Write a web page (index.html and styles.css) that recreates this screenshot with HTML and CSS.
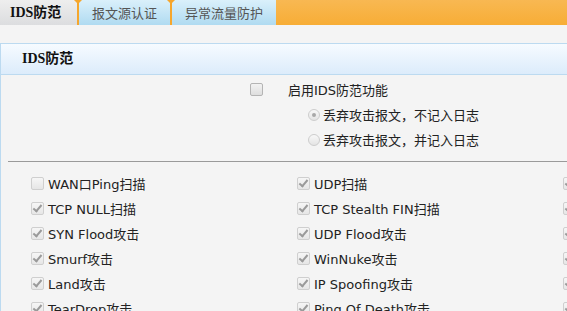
FILE: index.html
```html
<!DOCTYPE html>
<html lang="zh-CN">
<head>
    <meta charset="UTF-8">
    <title>IDS防范</title>
    <link rel="stylesheet" href="styles.css">
</head>
<body>
    <div class="tabs">
        <div class="tab active">IDS防范</div>
        <div class="tab">报文源认证</div>
        <div class="tab">异常流量防护</div>
    </div>

    <div class="panel">
        <div class="panel-head">IDS防范</div>
        <div class="panel-body">
            <div class="enable-row">
                <input type="checkbox" id="idsEnable">
                <label for="idsEnable">启用IDS防范功能</label>
            </div>
            <div class="radio-row">
                <input type="radio" name="mode" checked disabled>
                <span>丢弃攻击报文，不记入日志</span>
            </div>
            <div class="radio-row">
                <input type="radio" name="mode" disabled>
                <span>丢弃攻击报文，并记入日志</span>
            </div>
            <div class="divider"></div>
            <div class="attack-grid">
                <div class="item"><input type="checkbox" disabled><span>WAN口Ping扫描</span></div>
                <div class="item"><input type="checkbox" checked disabled><span>UDP扫描</span></div>
                <div class="item"><input type="checkbox" checked disabled></div>

                <div class="item"><input type="checkbox" checked disabled><span>TCP NULL扫描</span></div>
                <div class="item"><input type="checkbox" checked disabled><span>TCP Stealth FIN扫描</span></div>
                <div class="item"><input type="checkbox" checked disabled></div>

                <div class="item"><input type="checkbox" checked disabled><span>SYN Flood攻击</span></div>
                <div class="item"><input type="checkbox" checked disabled><span>UDP Flood攻击</span></div>
                <div class="item"><input type="checkbox" checked disabled></div>

                <div class="item"><input type="checkbox" checked disabled><span>Smurf攻击</span></div>
                <div class="item"><input type="checkbox" checked disabled><span>WinNuke攻击</span></div>
                <div class="item"><input type="checkbox" checked disabled></div>

                <div class="item"><input type="checkbox" checked disabled><span>Land攻击</span></div>
                <div class="item"><input type="checkbox" checked disabled><span>IP Spoofing攻击</span></div>
                <div class="item"><input type="checkbox" checked disabled></div>

                <div class="item"><input type="checkbox" checked disabled><span>TearDrop攻击</span></div>
                <div class="item"><input type="checkbox" checked disabled><span>Ping Of Death攻击</span></div>
                <div class="item"><input type="checkbox" checked disabled></div>
            </div>
        </div>
    </div>
</body>
</html>
```

FILE: styles.css
```css
body {
    margin: 0;
    background-color: #f4f4f4;
    font-family: "DejaVu Sans", "Noto Sans CJK SC", sans-serif;
    font-size: 13px;
    color: #222;
    overflow: hidden;
}
.tabs {
    display: flex;
    height: 25px;
    background: linear-gradient(#f8b852, #f7ad36);
}
.tab {
    position: relative;
    height: 25px;
    line-height: 25px;
    padding: 0 13px 0 13px;
    background: linear-gradient(#daf0fb, #b0dbf1);
    border-left: 2px solid #f6a62c;
    color: #555;
    font-family: "Noto Sans CJK SC", sans-serif;
    font-size: 13px;
    white-space: nowrap;
}
.tab::before {
    content: "";
    position: absolute;
    left: -5px;
    top: 0;
    border-left: 4px solid transparent;
    border-right: 4px solid transparent;
    border-top: 4px solid #f6a62c;
}
.tab.active {
    box-sizing: border-box;
    width: 77px;
    padding: 0 0 0 10px;
    border-left: none;
    background: linear-gradient(#eeeeee, #dcdddf);
    color: #111;
    font-family: "Liberation Serif", "Noto Sans CJK SC", serif;
    font-weight: bold;
    font-size: 14px;
}
.tab.active::before {
    display: none;
}
.panel {
    margin-top: 18px;
    width: 900px;
    border: 1px solid #bcdaf0;
    border-right: none;
}
.panel-head {
    height: 30px;
    line-height: 30px;
    padding-left: 21px;
    background: linear-gradient(#f6fbff, #dcecfb);
    border-bottom: 1px solid #bcdaf0;
    font-family: "Liberation Serif", "Noto Sans CJK SC", serif;
    font-weight: bold;
    font-size: 14px;
    color: #111;
}
.panel-body {
    padding-top: 2px;
}
input[type="checkbox"] {
    appearance: none;
    position: relative;
    box-sizing: border-box;
    width: 13px;
    height: 13px;
    margin: 0;
    border: 1px solid #b4b4b4;
    border-radius: 2px;
    background: linear-gradient(#f2f2f2, #dedede);
}
input[type="checkbox"]:disabled {
    border-color: #cfcfcf;
    background: linear-gradient(#f6f6f6, #e6e6e6);
}
input[type="checkbox"]:checked::after {
    content: "";
    position: absolute;
    left: 3px;
    top: 0;
    width: 3px;
    height: 7px;
    border: solid #9a9a9a;
    border-width: 0 2px 2px 0;
    transform: rotate(40deg);
}
input[type="radio"] {
    appearance: none;
    position: relative;
    box-sizing: border-box;
    width: 12px;
    height: 12px;
    margin: 0;
    border: 1px solid #cdcdcd;
    border-radius: 50%;
    background: linear-gradient(#f8f8f8, #e4e4e4);
}
input[type="radio"]:checked::after {
    content: "";
    position: absolute;
    left: 3px;
    top: 3px;
    width: 4px;
    height: 4px;
    border-radius: 50%;
    background-color: #a8a8a8;
}
.enable-row,
.radio-row {
    display: flex;
    align-items: center;
    height: 25px;
}
.enable-row {
    padding-left: 249px;
}
.enable-row label {
    margin-left: 25px;
}
.radio-row {
    padding-left: 307px;
}
.radio-row span {
    margin-left: 3px;
}
.divider {
    margin: 9px 0 0 7px;
    border-top: 1px solid #9a9a9a;
}
.attack-grid {
    display: grid;
    grid-template-columns: 266px 266px 266px;
    padding: 9px 0 0 30px;
}
.item {
    display: flex;
    align-items: center;
    height: 25px;
}
.item span {
    margin-left: 4px;
}
```
